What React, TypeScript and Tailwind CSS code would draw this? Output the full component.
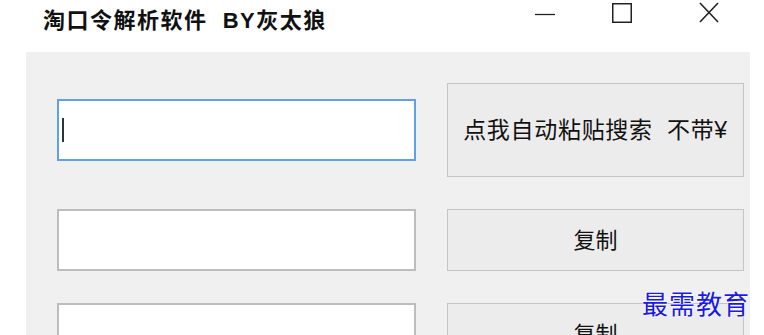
export default function App() {
  const font = "font-['Liberation_Sans','Noto_Sans_CJK_SC',sans-serif]"
  return (
    <div className={`relative w-[764px] h-[335px] overflow-hidden bg-white ${font}`}>
      {/* title bar */}
      <div className="flex h-[52px] items-start">
        <div className="pl-[43px] pt-[6px] text-[22px] font-bold text-[#111] leading-[30px] tracking-[1.5px]">
          淘口令解析软件&nbsp;&nbsp;BY灰太狼
        </div>
        <div className="ml-auto flex">
          <div className="flex w-[46px] h-[30px] items-start justify-center ml-0">
            <svg width="20" height="30" viewBox="0 0 20 30" className="mt-0">
              <line x1="0" y1="14.5" x2="20" y2="14.5" stroke="#222" strokeWidth="1.3" />
            </svg>
          </div>
          <div className="w-[44px]" />
          <div className="flex w-[20px] h-[30px]">
            <svg width="20" height="30" viewBox="0 0 20 30">
              <rect x="0.75" y="3.75" width="18.5" height="18.5" fill="none" stroke="#222" strokeWidth="1.5" />
            </svg>
          </div>
          <div className="w-[67px]" />
          <div className="flex w-[20px] h-[30px]">
            <svg width="20" height="30" viewBox="0 0 20 30">
              <path d="M1 3 L19 22 M19 3 L1 22" stroke="#222" strokeWidth="1.6" />
            </svg>
          </div>
          <div className="w-[45px]" />
        </div>
      </div>

      {/* client area */}
      <div className="ml-[26px] mr-[14px] h-[300px] bg-[#f0f0f0] pl-[31px] pr-[6px] pt-[31px] flex flex-col gap-[32px]">
        <div className="flex items-center gap-[31px] h-[94px]">
          <div className="relative w-[359px] h-[62px] bg-white border-2 border-[#5ea1e9]">
            <div className="absolute left-[3px] top-[17px] w-[2px] h-[24px] bg-[#333]" />
          </div>
          <button className="w-[297px] h-[94px] bg-[#ececec] border border-[#c4c4c4] text-[23px] tracking-[0.7px] text-[#111] whitespace-pre">
            点我自动粘贴搜索  不带¥
          </button>
        </div>
        <div className="flex items-center gap-[31px] h-[62px]">
          <div className="w-[359px] h-[62px] bg-white border-2 border-[#bdbdbd]" />
          <button className="w-[297px] h-[62px] bg-[#ececec] border border-[#c4c4c4] text-[22px] text-[#111]">
            复制
          </button>
        </div>
        <div className="flex items-center gap-[31px] h-[62px]">
          <div className="w-[359px] h-[62px] bg-white border-2 border-[#bdbdbd]" />
          <button className="w-[297px] h-[62px] bg-[#ececec] border border-[#c4c4c4] text-[22px] text-[#111]">
            复制
          </button>
        </div>
      </div>

      {/* watermark */}
      <div className="absolute left-[642px] top-[287px] text-[26px] leading-[36px] text-[#1a1ae6] tracking-[1px] [text-shadow:0_0_2px_#fff,0_0_2px_#fff]">
        最需教育
      </div>
    </div>
  )
}
